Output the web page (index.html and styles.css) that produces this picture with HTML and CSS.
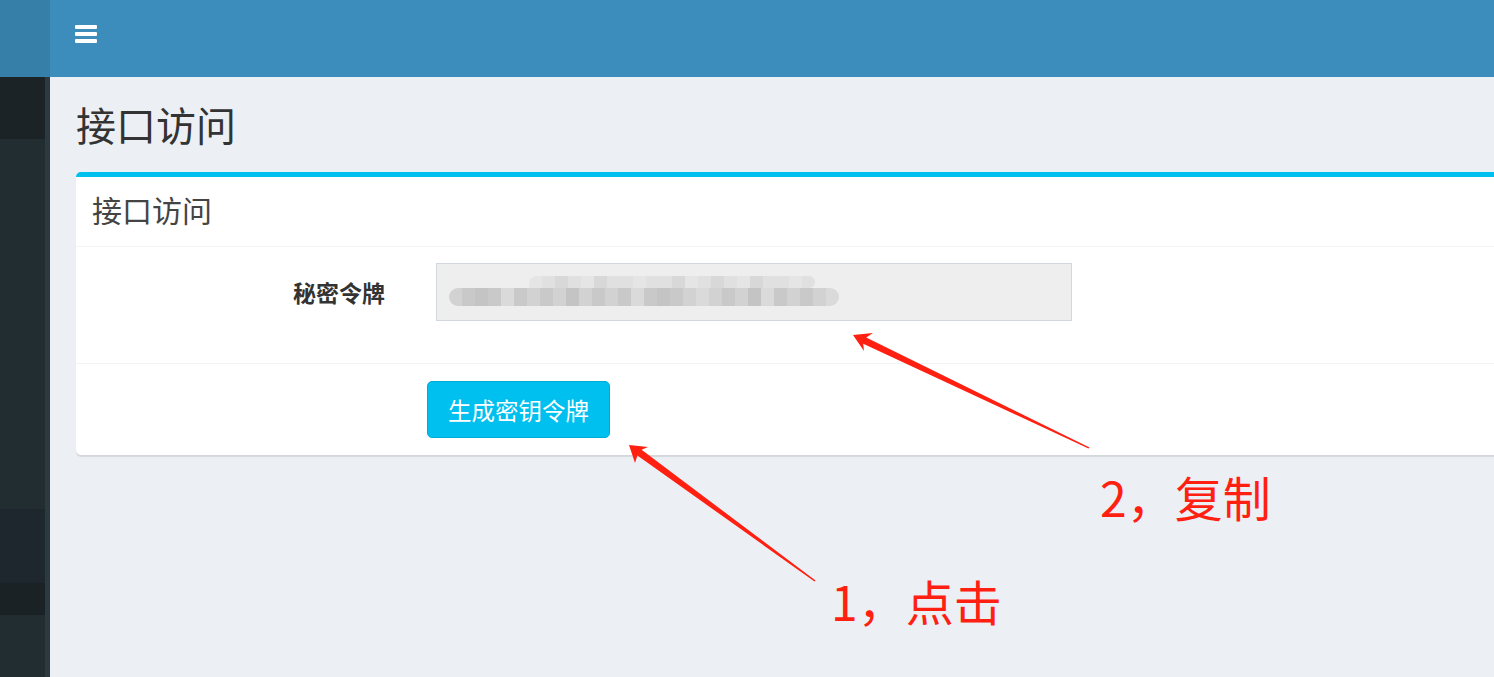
FILE: index.html
```html
<!DOCTYPE html>
<html lang="zh-CN">
<head>
    <meta charset="UTF-8">
    <meta name="viewport" content="width=device-width, initial-scale=1.0">
    <title>接口访问</title>
    <link rel="stylesheet" href="styles.css">
</head>
<body>
    <header class="main-header">
        <div class="logo"></div>
        <nav class="navbar">
            <a class="sidebar-toggle" href="#">
                <span></span><span></span><span></span>
            </a>
        </nav>
    </header>

    <div class="wrapper">
        <aside class="sidebar">
            <div class="menu-item active"></div>
            <div class="menu-item tall"></div>
            <div class="menu-item open"></div>
            <div class="menu-item current"></div>
            <div class="menu-item rest"></div>
        </aside>

        <main class="content-wrapper">
            <section class="content-header">
                <h1>接口访问</h1>
            </section>

            <section class="content">
                <div class="box">
                    <div class="box-header">
                        <h3 class="box-title">接口访问</h3>
                    </div>
                    <form class="form-horizontal">
                        <div class="box-body">
                            <div class="form-group">
                                <label class="control-label">秘密令牌</label>
                                <div class="field">
                                    <div class="form-control token">
                                        <div class="mosaic-row upper">
                                            <i></i><i></i><i></i><i></i><i></i><i></i><i></i><i></i><i></i><i></i><i></i><i></i><i></i><i></i><i></i><i></i><i></i><i></i><i></i><i></i><i></i><i></i>
                                        </div>
                                        <div class="mosaic-row lower">
                                            <i></i><i></i><i></i><i></i><i></i><i></i><i></i><i></i><i></i><i></i><i></i><i></i><i></i><i></i><i></i><i></i><i></i><i></i><i></i><i></i><i></i><i></i><i></i><i></i><i></i><i></i><i></i><i></i><i></i><i></i>
                                        </div>
                                    </div>
                                </div>
                            </div>
                        </div>
                        <div class="box-footer">
                            <div></div>
                            <div class="field">
                                <button type="button" class="btn-info">生成密钥令牌</button>
                            </div>
                        </div>
                    </form>
                </div>
            </section>
        </main>
    </div>

    <!-- screenshot annotations -->
    <svg class="arrows" width="1494" height="677" viewBox="0 0 1494 677">
        <polygon points="629,445 648,447 641.6,449.8 815.5,580.5 814.5,581.5 637.4,455.5 635,463" />
        <polygon points="853,335 873,333 866.2,337.5 1089.5,447.5 1088.5,448.5 863.2,343.8 864,351" />
    </svg>
    <div class="note note-copy">2，复制</div>
    <div class="note note-click">1，点击</div>
</body>
</html>
```

FILE: styles.css
```css
* {
    margin: 0;
    padding: 0;
    box-sizing: border-box;
}

body {
    font-family: "Noto Sans CJK SC", "Liberation Sans", sans-serif;
    color: #333;
    background-color: #ecf0f5;
    overflow: hidden;
    height: 677px;
}

/* header */
.main-header {
    display: flex;
    height: 77px;
}

.logo {
    width: 50px;
    background-color: #367fa9;
}

.navbar {
    flex: 1;
    background-color: #3c8dbc;
    padding: 25px 25px;
}

.sidebar-toggle {
    display: flex;
    flex-direction: column;
    gap: 3px;
    width: 22px;
}

.sidebar-toggle span {
    display: block;
    height: 4px;
    background-color: #fff;
    border-radius: 1px;
}

/* layout */
.wrapper {
    display: flex;
    height: 600px;
}

.sidebar {
    width: 50px;
    display: flex;
    flex-direction: column;
    background-color: #222d32;
    border-right: 5px solid #2b3940;
}

.menu-item.active {
    height: 62px;
    background-color: #1c2326;
}

.menu-item.tall {
    height: 370px;
}

.menu-item.open {
    height: 74px;
    background-color: #1f272e;
}

.menu-item.current {
    height: 32px;
    background-color: #1b2225;
}

.menu-item.rest {
    flex: 1;
}

.content-wrapper {
    flex: 1;
    background-color: #ecf0f5;
}

.content-header {
    padding: 23px 26px 0;
}

.content-header h1 {
    font-size: 40px;
    font-weight: normal;
    line-height: 48px;
    color: #333;
}

.content {
    padding: 24px 0 0 26px;
}

/* box */
.box {
    background: #fff;
    border-top: 5px solid #00c0ef;
    border-radius: 5px 0 0 5px;
    box-shadow: 0 2px 1px rgba(0, 0, 0, 0.1);
    margin-right: -20px;
}

.box-header {
    padding: 15px 16px 20px;
    border-bottom: 1px solid #f4f4f4;
}

.box-title {
    font-size: 30px;
    font-weight: normal;
    line-height: 34px;
    color: #444;
}

.box-body {
    padding: 16px 16px;
    border-bottom: 1px solid #f4f4f4;
}

.form-group,
.box-footer {
    display: grid;
    grid-template-columns: 319px 1fr;
    align-items: center;
}

.form-group {
    margin-bottom: 26px;
}

.control-label {
    font-size: 23px;
    font-weight: bold;
    text-align: right;
    padding-right: 26px;
    color: #333;
}

.form-group .field {
    padding-left: 25px;
}

.form-control {
    width: 636px;
    height: 58px;
    background-color: #eee;
    border: 1px solid #d2d6de;
}

.token {
    padding: 12px 0 0 12px;
}

.mosaic-row {
    display: flex;
    filter: blur(0.7px);
}

.mosaic-row i {
    display: block;
    width: 13px;
}

.mosaic-row.upper {
    margin-left: 80px;
    height: 12px;
}

.mosaic-row.upper i {
    background-color: #e0e0e0;
}

.mosaic-row.upper i:nth-child(3n) {
    background-color: #d8d8d8;
}

.mosaic-row.upper i:nth-child(4n+1) {
    background-color: #e5e5e5;
}

.mosaic-row.upper i:first-child {
    border-radius: 8px 0 0 0;
}

.mosaic-row.upper i:last-child {
    border-radius: 0 8px 8px 0;
}

.mosaic-row.lower {
    height: 18px;
}

.mosaic-row.lower i {
    background-color: #d2d2d2;
}

.mosaic-row.lower i:nth-child(2n) {
    background-color: #c9c9c9;
}

.mosaic-row.lower i:nth-child(5n) {
    background-color: #dadada;
}

.mosaic-row.lower i:nth-child(7n+3) {
    background-color: #c4c4c4;
}

.mosaic-row.lower i:first-child {
    border-radius: 9px 0 0 9px;
}

.mosaic-row.lower i:last-child {
    border-radius: 0 9px 9px 0;
}

.box-footer {
    padding: 17px 16px;
}

.box-footer .field {
    padding-left: 16px;
}

.btn-info {
    font-family: inherit;
    font-size: 23.5px;
    color: #fff;
    background-color: #00c0ef;
    border: 1px solid #00acd6;
    border-radius: 5px;
    height: 57px;
    padding: 0 20px;
    cursor: pointer;
}

/* annotations */
.arrows {
    position: absolute;
    left: 0;
    top: 0;
    pointer-events: none;
}

.arrows polygon {
    fill: #ff2011;
}

.note {
    position: absolute;
    font-size: 48px;
    line-height: 48px;
    color: #ff2011;
    white-space: nowrap;
}

.note-copy {
    left: 1100px;
    top: 472px;
}

.note-click {
    left: 831px;
    top: 576px;
}
```
